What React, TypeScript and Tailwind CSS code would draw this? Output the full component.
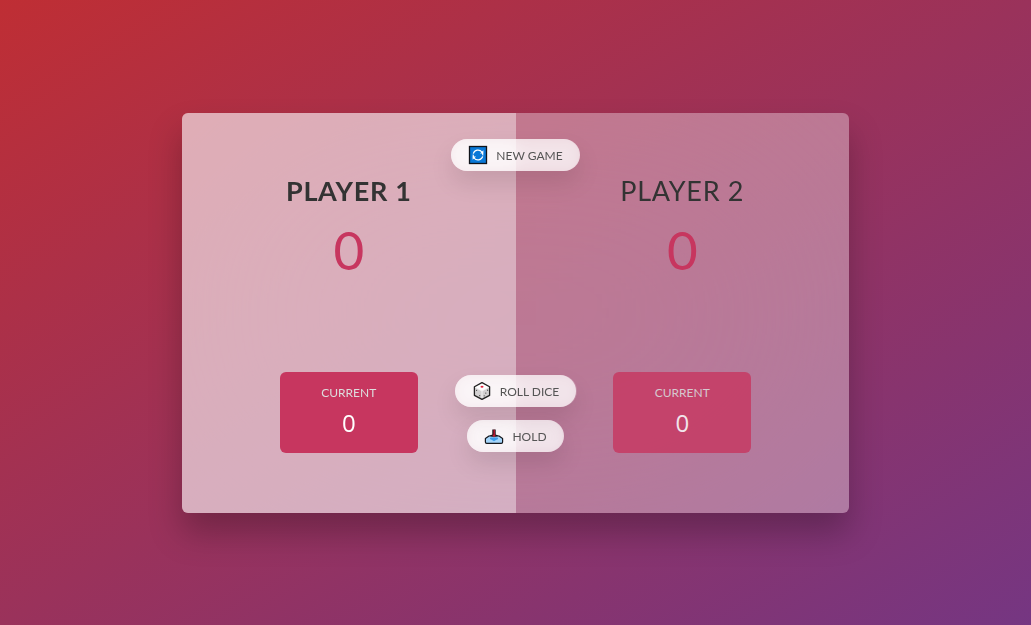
import { useState } from 'react';
import type { ReactNode } from 'react';

function NewGameIcon() {
  return (
    <svg width="20" height="20" viewBox="0 0 20 20" aria-hidden="true">
      <rect x="1.5" y="1.5" width="17" height="17" fill="#0a78d7" stroke="#10131a" strokeWidth="1.3" />
      <g fill="none" stroke="#fff" strokeWidth="1.2">
        <path d="M5.3 8.6A4.9 4.9 0 0 1 13.9 7" />
        <path d="M14.7 11.4A4.9 4.9 0 0 1 6.1 13" />
        <path d="M5.2 9.6a4.9 4.9 0 0 0 .9 3.4M14.8 10.4a4.9 4.9 0 0 0-.9-3.4" />
      </g>
      <path d="M15.4 5.2v3.4h-3.4z" fill="#fff" />
      <path d="M4.6 14.8v-3.4H8z" fill="#fff" />
    </svg>
  );
}

function DiceIcon() {
  return (
    <svg width="20" height="20" viewBox="0 0 20 20" aria-hidden="true">
      <path d="M10 1.6 17.6 5.8v8.6L10 18.4 2.4 14.4V5.8z" fill="#d3d1d2" />
      <path d="M10 1.6 17.6 5.8 10 10 2.4 5.8z" fill="#fff" />
      <path d="M10 10v8.4M2.4 5.8 10 10l7.6-4.2" fill="none" stroke="#f5f3f4" strokeWidth="1" />
      <path d="M10 1.6 17.6 5.8v8.6L10 18.4 2.4 14.4V5.8z" fill="none" stroke="#222" strokeWidth="1.3" strokeLinejoin="round" />
      <ellipse cx="10" cy="5.8" rx="1.5" ry="1" fill="#e2233f" />
      <g fill="#444">
        <circle cx="4.6" cy="9.3" r=".6" />
        <circle cx="7.7" cy="14.7" r=".6" />
        <circle cx="12.2" cy="14.8" r=".6" />
        <circle cx="13.8" cy="12.1" r=".6" />
        <circle cx="15.6" cy="9.2" r=".6" />
      </g>
    </svg>
  );
}

function HoldIcon() {
  return (
    <svg width="20" height="20" viewBox="0 0 20 20" aria-hidden="true">
      <path d="M1.4 12.4 5 9.8h10l3.6 2.6v4.8H1.4z" fill="#a5d5fa" />
      <path d="M6.4 11.4h7.2l.6 1.6-2.2 1-2 1.2-2-1.2-2.2-1z" fill="#3a9bec" />
      <path d="M1.4 12.4 5 10h10l3.6 2.4v3.7q0 1.3-1.3 1.3H2.7q-1.3 0-1.3-1.3z" fill="none" stroke="#15171c" strokeWidth="1.2" strokeLinejoin="round" />
      <path d="M8.3 3.4h3.4v5l3 1.3-3 .8H8l-2.7-.8 3-1.3z" fill="#17151a" />
      <path d="M9.5 3.8h1.4v5h1L10 11.6 8.2 8.8h1.3z" fill="#bf1630" />
    </svg>
  );
}

function ActionButton({ icon, children, onClick }: { icon: ReactNode; children: ReactNode; onClick: () => void }) {
  return (
    <button
      type="button"
      onClick={onClick}
      className="pointer-events-auto flex h-8 items-center gap-2 rounded-full bg-white/70 px-[17px] pt-px text-xs text-[#555] uppercase shadow-[0_12px_23px_rgba(0,0,0,0.1)] backdrop-blur-[7px]"
    >
      {icon}
      <span className="pt-0.5">{children}</span>
    </button>
  );
}

function Player({ name, score, current, active }: { name: string; score: number; current: number; active: boolean }) {
  return (
    <section className={`flex flex-1 flex-col items-center py-[60px] ${active ? 'bg-white/40' : ''}`}>
      <h2 className={`text-[27px] leading-9 tracking-wide uppercase ${active ? 'font-bold' : 'font-normal'}`}>{name}</h2>
      <p className="mt-1 text-[53px] leading-[74px] text-[#c7365f]">{score}</p>
      <div className={`mt-auto w-[138px] rounded-md bg-[#c7365f] pt-[11px] pb-[14px] text-center text-white ${active ? '' : 'opacity-80'}`}>
        <p className="text-xs leading-5 text-[#ddd] uppercase">Current</p>
        <p className="pt-1 font-['Open_Sans','Noto_Sans',sans-serif] text-2xl leading-8">{current}</p>
      </div>
    </section>
  );
}

export default function App() {
  const [scores, setScores] = useState([0, 0]);
  const [current, setCurrent] = useState(0);
  const [active, setActive] = useState(0);

  const newGame = () => {
    setScores([0, 0]);
    setCurrent(0);
    setActive(0);
  };

  const rollDice = () => {
    const dice = Math.floor(Math.random() * 6) + 1;
    if (dice === 1) {
      setCurrent(0);
      setActive(1 - active);
    } else {
      setCurrent(current + dice);
    }
  };

  const hold = () => {
    setScores(scores.map((score, i) => (i === active ? score + current : score)));
    setCurrent(0);
    setActive(1 - active);
  };

  return (
    <div className="flex min-h-screen items-center justify-center bg-[linear-gradient(to_top_left,#753682_0%,#bf2e34_100%)] font-['Lato','Noto_Sans',sans-serif] text-[#333]">
      <main className="relative flex min-h-[400px] w-full max-w-[667px] overflow-hidden rounded-md bg-white/35 shadow-[0_20px_33px_rgba(0,0,0,0.25)] backdrop-blur-[133px]">
        <Player name="Player 1" score={scores[0]} current={active === 0 ? current : 0} active={active === 0} />
        <Player name="Player 2" score={scores[1]} current={active === 1 ? current : 0} active={active === 1} />
        <div className="pointer-events-none absolute inset-0 flex flex-col items-center pt-[26px] pb-[61px]">
          <ActionButton icon={<NewGameIcon />} onClick={newGame}>New game</ActionButton>
          <div className="mt-auto flex flex-col items-center gap-[13px]">
            <ActionButton icon={<DiceIcon />} onClick={rollDice}>Roll dice</ActionButton>
            <ActionButton icon={<HoldIcon />} onClick={hold}>Hold</ActionButton>
          </div>
        </div>
      </main>
    </div>
  );
}
